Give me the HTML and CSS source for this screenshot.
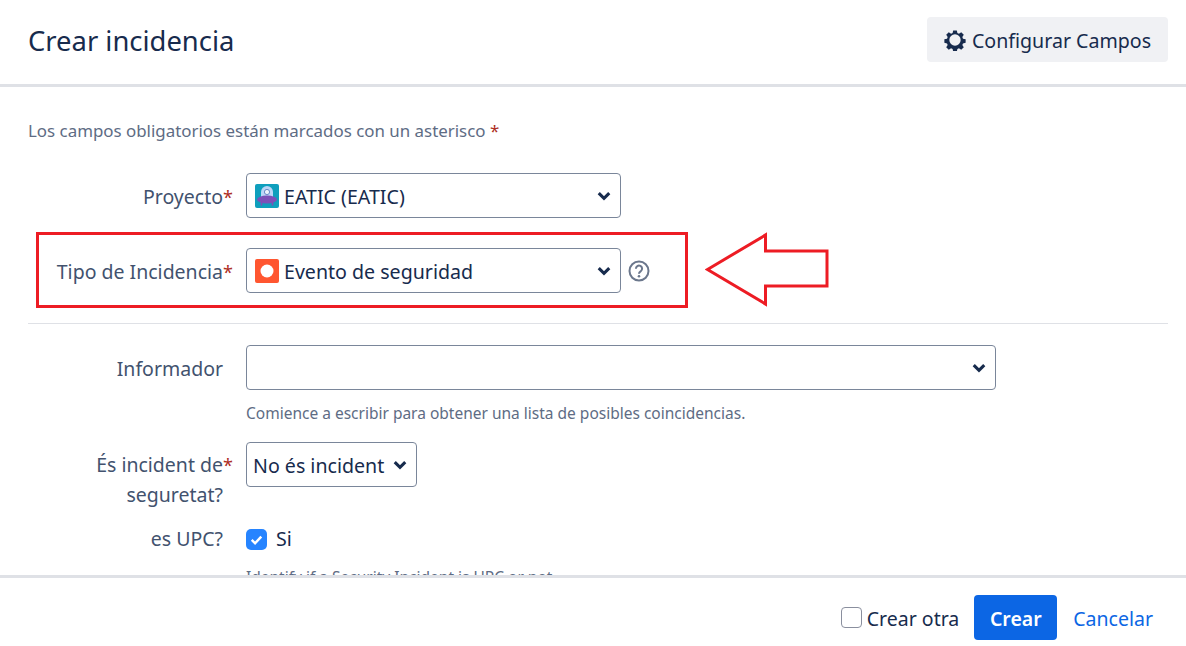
FILE: index.html
```html
<!DOCTYPE html>
<html lang="es">
<head>
<meta charset="UTF-8">
<title>Crear incidencia</title>
<link rel="stylesheet" href="styles.css">
</head>
<body>
<div class="dialog">
  <div class="dialog-header">
    <h1>Crear incidencia</h1>
    <button class="config-button">
      <svg class="gear" viewBox="0 0 24 24"><path fill-rule="evenodd" d="M10 1.5h4l.6 2.9 1.7.7 2.5-1.6 2.8 2.8-1.6 2.5.7 1.7 2.9.6v4l-2.9.6-.7 1.7 1.6 2.5-2.8 2.8-2.5-1.6-1.7.7-.6 2.9h-4l-.6-2.9-1.7-.7-2.5 1.6-2.8-2.8 1.6-2.5-.7-1.7-2.9-.6v-4l2.9-.6.7-1.7-1.6-2.5 2.8-2.8 2.5 1.6 1.7-.7zM12 5.8a6.2 6.2 0 1 0 0 12.4a6.2 6.2 0 0 0 0-12.4z"/></svg>
      <span class="text-nudge">Configurar Campos</span>
    </button>
  </div>

  <div class="dialog-body">
    <p class="required-note">Los campos obligatorios están marcados con un asterisco <span class="req">*</span></p>

    <div class="field field-project">
      <label class="field-label">Proyecto<span class="req req-label">*</span></label>
      <div class="select select-wide">
        <svg class="type-icon" viewBox="0 0 24 24">
          <rect width="24" height="24" rx="2" fill="#0f9fbd"/>
          <path d="M6 15V8a6 6 0 0 1 12 0v7z" fill="#bcd6f7"/>
          <circle cx="12" cy="8" r="2.6" fill="#eef4fd" stroke="#5d7fc0" stroke-width=".9"/>
          <ellipse cx="12" cy="15.5" rx="10" ry="4" fill="#7d50b8"/>
          <path d="M6.5 18v3.5M17.5 18v3.5" stroke="#7d50b8" stroke-width="1.6"/>
        </svg>
        <span class="select-text">EATIC (EATIC)</span>
        <svg class="chevron" viewBox="0 0 12 8"><path d="M1.5 1.5 6 6l4.5-4.5" /></svg>
      </div>
    </div>

    <div class="field field-type">
      <label class="field-label">Tipo de Incidencia<span class="req req-label">*</span></label>
      <div class="select select-wide">
        <svg class="type-icon" viewBox="0 0 24 24">
          <rect width="24" height="24" rx="2" fill="#ff5630"/>
          <circle cx="12" cy="12" r="6.5" fill="#fff"/>
        </svg>
        <span class="select-text">Evento de seguridad</span>
        <svg class="chevron" viewBox="0 0 12 8"><path d="M1.5 1.5 6 6l4.5-4.5" /></svg>
      </div>
      <svg class="help-icon" viewBox="0 0 22 22">
        <circle cx="11" cy="11" r="9.5" fill="none" stroke="#6b778c" stroke-width="2"/>
        <path d="M7.9 8.7a3.1 3.1 0 1 1 4.9 2.5c-1.1.8-1.8 1.2-1.8 2.5" fill="none" stroke="#6b778c" stroke-width="2"/>
        <circle cx="11" cy="16.3" r="1.3" fill="#6b778c"/>
      </svg>
    </div>

    <hr class="divider">

    <div class="field field-reporter">
      <label class="field-label">Informador</label>
      <div>
        <div class="select select-full">
          <span class="select-text"></span>
          <svg class="chevron" viewBox="0 0 12 8"><path d="M1.5 1.5 6 6l4.5-4.5" /></svg>
        </div>
        <div class="hint">Comience a escribir para obtener una lista de posibles coincidencias.</div>
      </div>
    </div>

    <div class="field field-security">
      <label class="field-label">És incident de<span class="req req-label">*</span><br>seguretat?</label>
      <div class="select select-small">
        <span class="select-text">No és incident</span>
        <svg class="chevron" viewBox="0 0 12 8"><path d="M1.5 1.5 6 6l4.5-4.5" /></svg>
      </div>
    </div>

    <div class="field field-upc">
      <label class="field-label">es UPC?</label>
      <div>
        <div class="check-row">
          <span class="checkbox checked">
            <svg viewBox="0 0 22 22"><path d="M6 11.5 9.5 15 16 8" /></svg>
          </span>
          <span>Si</span>
        </div>
        <div class="hint hint-upc">Identify if a Security Incident is UPC or not</div>
      </div>
    </div>
  </div>

  <div class="dialog-footer">
    <span class="checkbox"></span>
    <span class="create-other text-nudge">Crear otra</span>
    <button class="create-button">Crear</button>
    <a class="cancel-link text-nudge">Cancelar</a>
  </div>
</div>

<!-- red annotation drawn over the screenshot -->
<div class="mark-box"></div>
<svg class="mark-arrow" viewBox="0 0 126 78">
  <path d="M2.5 38.5 60.5 4V20H122V55H60.5V73z" fill="#fff" stroke="#ed1c24" stroke-width="3"/>
</svg>
</body>
</html>
```

FILE: styles.css
```css
* {
  box-sizing: border-box;
}

body {
  margin: 0;
  font-family: "Noto Sans", sans-serif;
  color: #172b4d;
  background: #fff;
  overflow: hidden;
}

.dialog {
  width: 1186px;
  height: 646px;
  display: flex;
  flex-direction: column;
}

.dialog-header {
  height: 87px;
  flex: none;
  padding: 17px 18px 0 28px;
  border-bottom: 3px solid #dfe1e6;
  display: flex;
  justify-content: space-between;
  align-items: flex-start;
}

.dialog-header h1 {
  margin: 1px 0 0;
  font-size: 27.4px;
  font-weight: 400;
  line-height: 46px;
}

.config-button {
  height: 45px;
  width: 241px;
  padding: 0;
  border: none;
  border-radius: 4px;
  background: #f0f1f4;
  color: #172b4d;
  font-family: inherit;
  font-size: 19.6px;
  display: flex;
  align-items: center;
  justify-content: center;
  gap: 6px;
}

.text-nudge {
  padding-top: 2px;
}

.gear {
  width: 22px;
  height: 22px;
  fill: #172b4d;
}

.dialog-body {
  flex: 1;
  overflow: hidden;
  padding: 0 18px 0 28px;
}

.required-note {
  margin: 32px 0 0;
  font-size: 16.9px;
  line-height: 24px;
  color: #5e6c84;
}

.req {
  color: #ae2e24;
}

.field {
  display: flex;
  align-items: flex-start;
}

.field-label {
  width: 195px;
  flex: none;
  text-align: right;
  font-size: 19.5px;
  line-height: 30px;
  color: #42526e;
  padding-top: 9px;
}

.req-label {
  position: absolute;
  font-size: 18px;
}

.field-project {
  margin-top: 30px;
}

.field-type {
  margin-top: 30px;
  align-items: center;
}

.field-type .field-label {
  padding-top: 2px;
}

.field-security .field-label {
  padding-top: 8px;
}

.select {
  height: 45px;
  margin-left: 23px;
  border: 1px solid #7a869a;
  border-radius: 4px;
  background: #fff;
  display: flex;
  align-items: center;
  padding: 0 9px 0 8px;
  font-size: 19.6px;
  color: #172b4d;
}

.select-wide {
  width: 375px;
}

.select-full {
  width: 750px;
}

.select-small {
  width: 171px;
  padding: 0 9px 0 6px;
}

.select-text {
  flex: 1;
  padding-top: 2px;
  white-space: nowrap;
}

.type-icon {
  width: 24px;
  height: 24px;
  margin-right: 5px;
  flex: none;
}

.chevron {
  width: 14px;
  height: 10px;
  flex: none;
  fill: none;
  stroke: #172b4d;
  stroke-width: 2.6;
}

.help-icon {
  width: 22px;
  height: 22px;
  margin-left: 7px;
}

.divider {
  margin: 30px 0 0;
  border: none;
  border-top: 1px solid #dfe1e6;
}

.field-reporter {
  margin-top: 21px;
}

.hint {
  margin: 12px 0 0 23px;
  font-size: 15.5px;
  line-height: 22px;
  color: #5e6c84;
  white-space: nowrap;
}

.field-security {
  margin-top: 18px;
}

.field-upc {
  margin-top: 14px;
}

.field-upc .field-label {
  padding-top: 0;
}

.check-row {
  margin-left: 23px;
  display: flex;
  align-items: center;
  gap: 9px;
  font-size: 19.6px;
  line-height: 30px;
}

.checkbox {
  width: 21px;
  height: 21px;
  flex: none;
  border: 1px solid #8a8f9e;
  border-radius: 4px;
  background: #fff;
  display: block;
}

.checkbox.checked {
  background: #2684ff;
  border: none;
  border-radius: 5px;
}

.checkbox svg {
  display: block;
  fill: none;
  stroke: #fff;
  stroke-width: 2.6;
}

.hint-upc {
  margin-top: 12px;
}

.dialog-footer {
  height: 71px;
  flex: none;
  border-top: 3px solid #dfe1e6;
  background: #fff;
  padding: 11px 33px 0 0;
  display: flex;
  align-items: center;
  justify-content: flex-end;
  font-size: 19.5px;
}

.create-other {
  margin-left: 5px;
}

.create-button {
  width: 83px;
  height: 45px;
  margin-left: 15px;
  border: none;
  border-radius: 4px;
  background: #0c66e4;
  color: #fff;
  font-family: inherit;
  font-size: 19.5px;
  font-weight: 600;
  padding: 2px 0 0;
}

.cancel-link {
  margin-left: 16px;
  color: #0c66e4;
}

.mark-box {
  position: absolute;
  left: 36px;
  top: 232px;
  width: 652px;
  height: 76px;
  border: 3px solid #ed1c24;
}

.mark-arrow {
  position: absolute;
  left: 705px;
  top: 231px;
  width: 126px;
  height: 78px;
}
```
